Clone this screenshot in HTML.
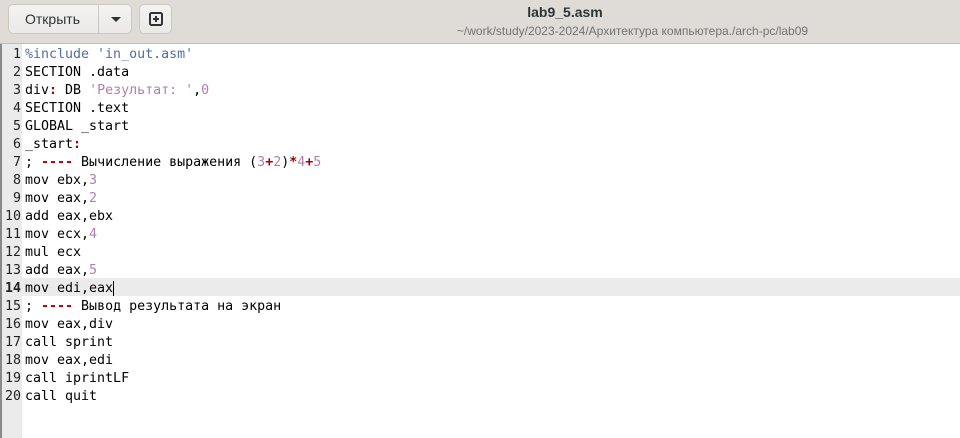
<!DOCTYPE html>
<html><head><meta charset="utf-8"><style>
body{margin:0;width:960px;height:438px;overflow:hidden;background:#fff;font-family:"Liberation Sans","DejaVu Sans",sans-serif;position:relative}
.hdr{position:absolute;left:0;top:0;width:960px;height:43px;background:#dfdcd8;border-bottom:1px solid #c0bdb8}
.btn{position:absolute;top:4px;height:30px;border:1px solid #cdc7c2;border-radius:5px;background:linear-gradient(#f4f3f2,#ebe9e7);box-sizing:border-box}
.title{position:absolute;left:0;width:1130px;text-align:center;top:4px;font-weight:bold;font-size:14px;color:#2e3436}
.sub{position:absolute;left:0;width:1265px;text-align:center;top:24px;font-size:12px;color:#737373}
.gut{position:absolute;left:0;top:44px;width:22px;height:394px;background:#ebebeb;border-left:2px solid #8a8a8a;box-sizing:border-box}
.code{position:absolute;left:0;top:45px;font-family:"DejaVu Sans Mono",monospace;font-size:13.3px;color:#000}
.l{height:18px;line-height:18px;padding-top:1px;box-sizing:border-box;white-space:pre;position:relative}
.n{display:inline-block;width:21px;text-align:right;color:#222;margin-right:4px}
.cur{background:#ebebeb;width:938px;position:absolute;left:22px;top:-1px;height:18px;z-index:-1}
.s{color:#4e6fa0}.p{color:#b07fb0}.r{color:#a40000;font-weight:bold}
</style></head><body>
<div class="hdr">
<div class="btn" style="left:8px;width:124px"><span style="position:absolute;left:16px;top:6px;font-size:14px;color:#2e3436">Открыть</span><span style="position:absolute;left:89px;top:0;width:1px;height:28px;background:#cdc7c2"></span><span style="position:absolute;left:102px;top:12px;border-left:5px solid transparent;border-right:5px solid transparent;border-top:5px solid #2e3436"></span></div>
<div class="btn" style="left:139px;width:33px"><svg style="position:absolute;left:9px;top:7px" width="14" height="14" viewBox="0 0 14 14"><rect x="1" y="1" width="12" height="12" rx="1.5" fill="none" stroke="#2e3436" stroke-width="2"/><path d="M7 4v6M4 7h6" stroke="#2e3436" stroke-width="2"/></svg></div>
<div class="title">lab9_5.asm</div>
<div class="sub">~/work/study/2023-2024/Архитектура компьютера./arch-pc/lab09</div>
</div>
<div class="gut"></div>
<div class="code">
<div class="l"><span class="n">1</span><span class="s">%include 'in_out.asm'</span></div>
<div class="l"><span class="n">2</span>SECTION .data</div>
<div class="l"><span class="n">3</span>div<span class="r">:</span> DB <span class="p">'Результат: '</span>,<span class="p">0</span></div>
<div class="l"><span class="n">4</span>SECTION .text</div>
<div class="l"><span class="n">5</span>GLOBAL _start</div>
<div class="l"><span class="n">6</span>_start<span class="r">:</span></div>
<div class="l"><span class="n">7</span>; <span class="r">----</span> Вычисление выражения (<span class="p">3</span><span class="r">+</span><span class="p">2</span>)<span class="r">*</span><span class="p">4</span><span class="r">+</span><span class="p">5</span></div>
<div class="l"><span class="n">8</span>mov ebx,<span class="p">3</span></div>
<div class="l"><span class="n">9</span>mov eax,<span class="p">2</span></div>
<div class="l"><span class="n">10</span>add eax,ebx</div>
<div class="l"><span class="n">11</span>mov ecx,<span class="p">4</span></div>
<div class="l"><span class="n">12</span>mul ecx</div>
<div class="l"><span class="n">13</span>add eax,<span class="p">5</span></div>
<div class="l"><div class="cur"></div><span class="n" style="font-weight:bold">14</span>mov edi,eax<span style="border-left:1px solid #000;margin-left:0"></span></div>
<div class="l"><span class="n">15</span>; <span class="r">----</span> Вывод результата на экран</div>
<div class="l"><span class="n">16</span>mov eax,div</div>
<div class="l"><span class="n">17</span>call sprint</div>
<div class="l"><span class="n">18</span>mov eax,edi</div>
<div class="l"><span class="n">19</span>call iprintLF</div>
<div class="l"><span class="n">20</span>call quit</div>
</div>
</body></html>
